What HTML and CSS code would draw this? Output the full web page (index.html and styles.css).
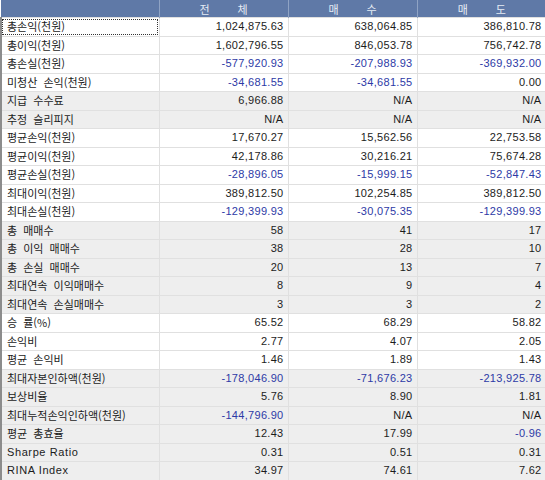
FILE: index.html
```html
<!DOCTYPE html>
<html lang="ko">
<head>
<meta charset="utf-8">
<link rel="stylesheet" href="styles.css">
</head>
<body>
<table class="grid">
  <colgroup>
    <col class="c-label"><col class="c-num"><col class="c-num"><col class="c-num">
  </colgroup>
  <thead>
    <tr class="head">
      <th></th>
      <th><span class="ht"><span>전</span><span>체</span></span></th>
      <th><span class="ht"><span>매</span><span>수</span></span></th>
      <th><span class="ht"><span>매</span><span>도</span></span></th>
    </tr>
  </thead>
  <tbody>
    <tr><td class="lbl focus">총손익(천원)</td><td>1,024,875.63</td><td>638,064.85</td><td>386,810.78</td></tr>
    <tr><td class="lbl">총이익(천원)</td><td>1,602,796.55</td><td>846,053.78</td><td>756,742.78</td></tr>
    <tr><td class="lbl">총손실(천원)</td><td class="neg">-577,920.93</td><td class="neg">-207,988.93</td><td class="neg">-369,932.00</td></tr>
    <tr><td class="lbl">미청산 손익(천원)</td><td class="neg">-34,681.55</td><td class="neg">-34,681.55</td><td>0.00</td></tr>
    <tr class="alt"><td class="lbl">지급 수수료</td><td>6,966.88</td><td>N/A</td><td>N/A</td></tr>
    <tr class="alt"><td class="lbl">추정 슬리피지</td><td>N/A</td><td>N/A</td><td>N/A</td></tr>
    <tr><td class="lbl">평균손익(천원)</td><td>17,670.27</td><td>15,562.56</td><td>22,753.58</td></tr>
    <tr><td class="lbl">평균이익(천원)</td><td>42,178.86</td><td>30,216.21</td><td>75,674.28</td></tr>
    <tr><td class="lbl">평균손실(천원)</td><td class="neg">-28,896.05</td><td class="neg">-15,999.15</td><td class="neg">-52,847.43</td></tr>
    <tr><td class="lbl">최대이익(천원)</td><td>389,812.50</td><td>102,254.85</td><td>389,812.50</td></tr>
    <tr><td class="lbl">최대손실(천원)</td><td class="neg">-129,399.93</td><td class="neg">-30,075.35</td><td class="neg">-129,399.93</td></tr>
    <tr class="alt"><td class="lbl">총 매매수</td><td>58</td><td>41</td><td>17</td></tr>
    <tr class="alt"><td class="lbl">총 이익 매매수</td><td>38</td><td>28</td><td>10</td></tr>
    <tr class="alt"><td class="lbl">총 손실 매매수</td><td>20</td><td>13</td><td>7</td></tr>
    <tr class="alt"><td class="lbl">최대연속 이익매매수</td><td>8</td><td>9</td><td>4</td></tr>
    <tr class="alt"><td class="lbl">최대연속 손실매매수</td><td>3</td><td>3</td><td>2</td></tr>
    <tr><td class="lbl">승 률(%)</td><td>65.52</td><td>68.29</td><td>58.82</td></tr>
    <tr><td class="lbl">손익비</td><td>2.77</td><td>4.07</td><td>2.05</td></tr>
    <tr><td class="lbl">평균 손익비</td><td>1.46</td><td>1.89</td><td>1.43</td></tr>
    <tr class="alt"><td class="lbl">최대자본인하액(천원)</td><td class="neg">-178,046.90</td><td class="neg">-71,676.23</td><td class="neg">-213,925.78</td></tr>
    <tr class="alt"><td class="lbl">보상비율</td><td>5.76</td><td>8.90</td><td>1.81</td></tr>
    <tr class="alt"><td class="lbl">최대누적손익인하액(천원)</td><td class="neg">-144,796.90</td><td>N/A</td><td>N/A</td></tr>
    <tr class="alt"><td class="lbl">평균 총효율</td><td>12.43</td><td>17.99</td><td class="neg">-0.96</td></tr>
    <tr class="alt"><td class="lbl en">Sharpe Ratio</td><td>0.31</td><td>0.51</td><td>0.31</td></tr>
    <tr class="alt"><td class="lbl en">RINA Index</td><td>34.97</td><td>74.61</td><td>7.62</td></tr>
  </tbody>
</table>
</body>
</html>
```
FILE: styles.css
```css
html, body {
  margin: 0;
  padding: 0;
  background: #ffffff;
}

.grid {
  width: 545px;
  border-collapse: collapse;
  table-layout: fixed;
  font-family: "Liberation Sans", "Noto Sans CJK KR", sans-serif;
  font-size: 11px;
  color: #1c1c1c;
}

.c-label { width: 158px; }
.c-num { width: 129px; }

.head th {
  height: 17px;
  padding: 0;
  background: #5f79a7;
  color: #e6ecf5;
  font-weight: normal;
  font-family: "Noto Sans CJK KR", sans-serif;
  font-size: 11px;
  border-left: 1px solid #8fa3c4;
  text-align: center;
  vertical-align: middle;
}
.head th:first-child { border-left: none; }

.ht {
  display: inline-flex;
  gap: 28px;
}

tbody td {
  height: 17.5px;
  padding: 0 4px 0 4px;
  border: 1px solid #e0e0e0;
  text-align: right;
  vertical-align: middle;
  white-space: nowrap;
  letter-spacing: 0.3px;
  line-height: 1;
}

tbody td.lbl {
  text-align: left;
  padding-left: 5px;
  font-family: "Noto Sans CJK KR", sans-serif;
  font-size: 11px;
  letter-spacing: 0;
  word-spacing: 3px;
  border-left: 2px solid #8c8c8c;
}

tbody td.lbl.en {
  font-family: "Liberation Sans", sans-serif;
  letter-spacing: 0.6px;
  word-spacing: 0;
}

tbody tr.alt td { background: #eeeeee; }

td.neg { color: #2d3aa6; }

td.focus {
  outline: 1px dotted #333333;
  outline-offset: -2px;
}
```
